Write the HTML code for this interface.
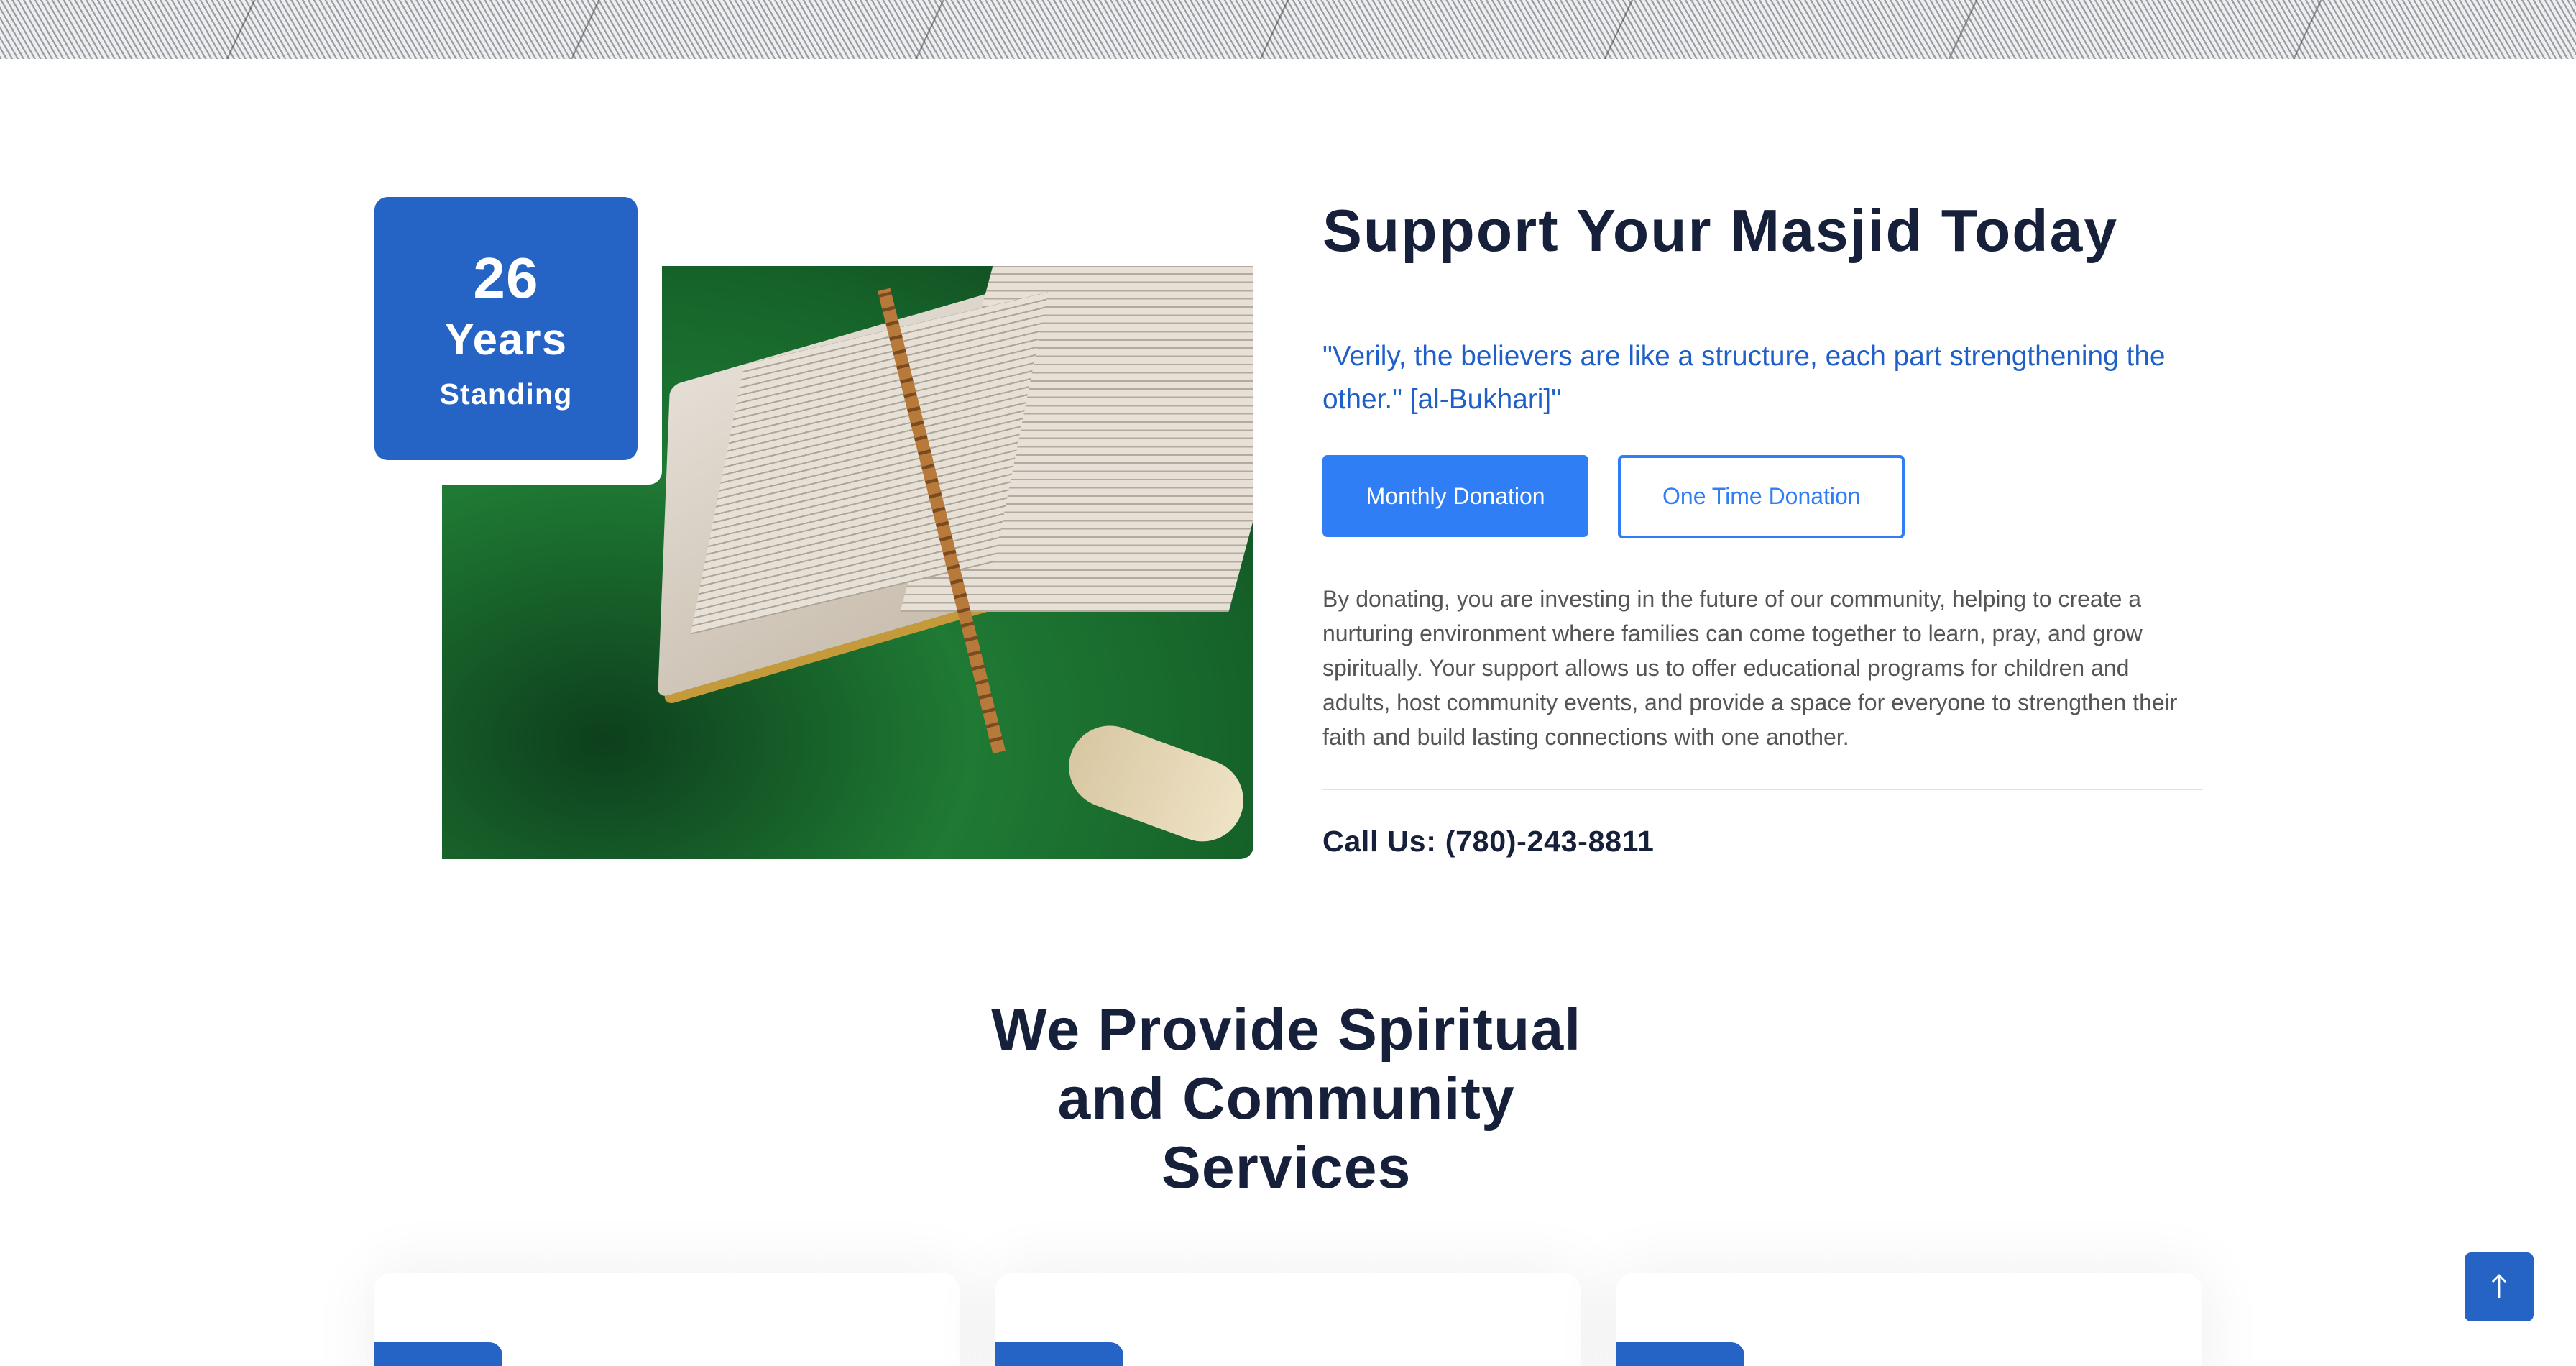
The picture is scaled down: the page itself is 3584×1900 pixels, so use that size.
<!DOCTYPE html>
<html><head><meta charset="utf-8"><style>
html,body{margin:0;padding:0;background:#fff;overflow:hidden}
body{width:1568px;height:831px;zoom:2.2857;position:relative;font-family:"Liberation Sans",Arial,sans-serif}
.a{position:absolute}
.banner{left:0;top:0;width:1568px;height:36px;background:repeating-linear-gradient(60deg,#9a9da1 0 1px,#eceef0 1px 3px),#ccc}
.banner:after{content:"";position:absolute;inset:0;background:repeating-linear-gradient(115deg,transparent 0 140px,rgba(60,60,60,.5) 140px 141px,transparent 141px 190px)}
h1,h2{margin:0;color:#17203a;font-weight:bold}
.card{background:#fff;border-radius:10px;box-shadow:0 0 40px rgba(0,0,0,.08);width:356px;height:80px;top:775px}
.tab{background:#2563c4;width:78px;height:20px;top:817px;border-radius:0 8px 0 0}
</style></head><body>
<div class="a banner"></div>

<div class="a" style="left:269px;top:162px;width:494px;height:361px;border-radius:0 0 8px 0;overflow:hidden;background:radial-gradient(ellipse at 20% 80%,#0d3f1c,#1f7a34 40%,#16632a 70%,#0e3c1a)">
  <div class="a" style="left:145px;top:20px;width:310px;height:200px;background:linear-gradient(160deg,#e4ded5,#c4b8a8);transform:skewX(-20deg) rotate(-18deg);border-radius:6px;box-shadow:4px 6px 0 #c59a3a"></div>
  <div class="a" style="left:310px;top:-20px;width:200px;height:230px;background:repeating-linear-gradient(0deg,#b3aa9d 0 1px,#e6e0d7 1px 5px);transform:skewX(-15deg)"></div>
  <div class="a" style="left:175px;top:35px;width:170px;height:170px;background:repeating-linear-gradient(0deg,#ada596 0 1px,#e6e0d7 1px 5px);transform:skewX(-25deg) rotate(-15deg)"></div>
  <div class="a" style="left:300px;top:10px;width:8px;height:290px;background:repeating-linear-gradient(0deg,#b87a3a 0 7px,#7a4a20 7px 9px);transform:rotate(-14deg)"></div>
  <div class="a" style="left:380px;top:290px;width:110px;height:50px;background:linear-gradient(90deg,#d8c7a2,#efe3c6);transform:rotate(20deg);border-radius:30px"></div>
</div>

<div class="a" style="left:227px;top:120px;width:176px;height:175px;background:#fff;border-radius:8px"></div>
<div class="a" style="left:228px;top:120px;width:160px;height:160px;background:#2563c4;border-radius:8px;color:#fff;text-align:center;font-weight:bold;letter-spacing:0.5px">
  <div style="font-size:35px;margin-top:29px;line-height:40px">26</div>
  <div style="font-size:27px;line-height:36px">Years</div>
  <div style="font-size:18px;line-height:30px">Standing</div>
</div>

<h1 class="a" style="left:805px;top:119px;font-size:36px;line-height:44px;letter-spacing:0.9px">Support Your Masjid Today</h1>
<div class="a" style="left:805px;top:204px;width:545px;font-size:17px;line-height:26px;color:#1f5fc8">"Verily, the believers are like a structure, each part strengthening the other." [al-Bukhari]"</div>
<div class="a" style="left:805px;top:277px;width:162px;height:50px;background:#2f7ef5;border-radius:3px;color:#fff;font-size:14px;line-height:50px;text-align:center">Monthly Donation</div>
<div class="a" style="left:985px;top:277px;width:171px;height:47px;border:2px solid #2f7ef5;border-radius:3px;color:#2f7ef5;font-size:14px;line-height:47px;text-align:center">One Time Donation</div>
<div class="a" style="left:805px;top:354px;width:530px;font-size:14px;line-height:21px;color:#555">By donating, you are investing in the future of our community, helping to create a nurturing environment where families can come together to learn, pray, and grow spiritually. Your support allows us to offer educational programs for children and adults, host community events, and provide a space for everyone to strengthen their faith and build lasting connections with one another.</div>
<div class="a" style="left:805px;top:480px;width:536px;height:1px;background:#e2e2e2"></div>
<div class="a" style="left:805px;top:502px;font-size:18px;font-weight:bold;color:#17203a;letter-spacing:0.3px">Call Us: (780)-243-8811</div>

<h2 class="a" style="left:573px;top:606px;width:420px;text-align:center;font-size:36px;line-height:42px;letter-spacing:0.5px">We Provide Spiritual and Community Services</h2>

<div class="a card" style="left:228px"></div>
<div class="a card" style="left:606px"></div>
<div class="a card" style="left:984px"></div>
<div class="a tab" style="left:228px"></div>
<div class="a tab" style="left:606px"></div>
<div class="a tab" style="left:984px"></div>

<div class="a" style="left:1500px;top:762px;width:42px;height:42px;background:#2563c4;border-radius:4px">
<svg width="42" height="42" viewBox="0 0 42 42"><path d="M21 28V14M17 18l4-4 4 4" stroke="#fff" stroke-width="1.2" fill="none"/></svg>
</div>
</body></html>
